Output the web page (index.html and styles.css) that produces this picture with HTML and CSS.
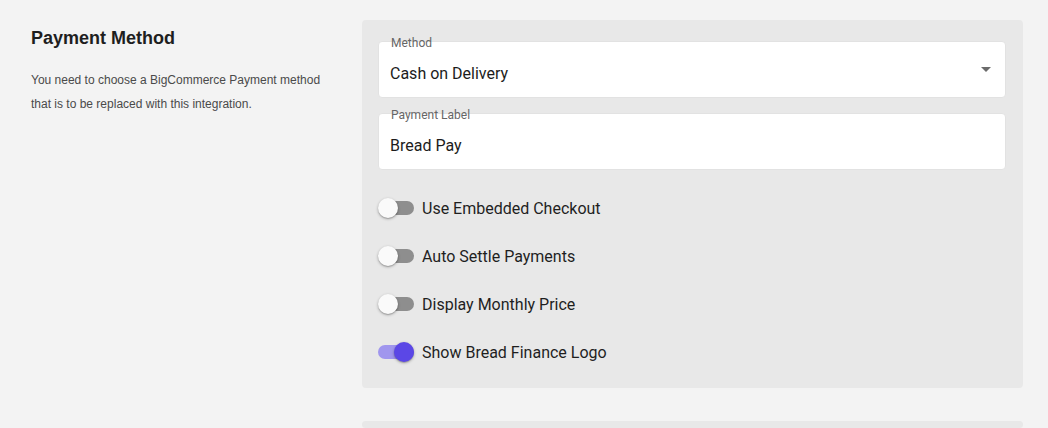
FILE: index.html
```html
<!DOCTYPE html>
<html>
<head>
<meta charset="utf-8">
<link rel="stylesheet" href="styles.css">
</head>
<body>
<div class="page">
  <section class="section">
    <div class="intro">
      <h2 class="title">Payment Method</h2>
      <p class="desc">You need to choose a BigCommerce Payment method that is to be replaced with this integration.</p>
    </div>
    <div class="panel">
      <div class="field">
        <span class="field-label">Method</span>
        <span class="field-value">Cash on Delivery</span>
        <span class="caret"></span>
      </div>
      <div class="field">
        <span class="field-label">Payment Label</span>
        <span class="field-value">Bread Pay</span>
      </div>
      <div class="toggles">
        <label class="toggle-row"><span class="switch"><span class="track"></span><span class="thumb"></span></span><span class="toggle-text">Use Embedded Checkout</span></label>
        <label class="toggle-row"><span class="switch"><span class="track"></span><span class="thumb"></span></span><span class="toggle-text">Auto Settle Payments</span></label>
        <label class="toggle-row"><span class="switch"><span class="track"></span><span class="thumb"></span></span><span class="toggle-text">Display Monthly Price</span></label>
        <label class="toggle-row"><span class="switch on"><span class="track"></span><span class="thumb"></span></span><span class="toggle-text">Show Bread Finance Logo</span></label>
      </div>
    </div>
  </section>
  <section class="section">
    <div class="intro"></div>
    <div class="panel next"></div>
  </section>
</div>
</body>
</html>
```

FILE: styles.css
```css
html, body {
  margin: 0;
  padding: 0;
  background: #f3f3f3;
}
body {
  font-family: Roboto, "Liberation Sans", sans-serif;
  color: #212121;
  overflow: hidden;
  height: 428px;
}
.page {
  padding: 20px 25px 0 31px;
  display: flex;
  flex-direction: column;
  gap: 33px;
}
.section {
  display: flex;
}
.intro {
  width: 331px;
  flex: none;
}
.title {
  margin: 7px 0 0 0;
  font-family: "Liberation Sans", Arial, sans-serif;
  font-weight: bold;
  font-size: 18px;
  line-height: 22px;
  color: #1e1e1e;
}
.desc {
  margin: 19px 0 0 0;
  font-family: "Liberation Sans", Arial, sans-serif;
  font-size: 12px;
  line-height: 24px;
  color: #4a4a4a;
  width: 300px;
}
.panel {
  flex: 1;
  background: #e8e8e8;
  border-radius: 4px;
  padding: 21px 17px 12px 16px;
  display: flex;
  flex-direction: column;
  gap: 15px;
}
.panel.next {
  height: 7px;
  padding: 0;
}
.field {
  position: relative;
  height: 57px;
  box-sizing: border-box;
  background: #fff;
  border: 1px solid #e2e2e2;
  border-radius: 4px;
  padding: 22px 11px 0;
}
.field-label {
  position: absolute;
  left: 11px;
  top: -6px;
  font-size: 12px;
  line-height: 14px;
  color: #666;
  padding: 0 1px;
}
.field-value {
  font-size: 16px;
  line-height: 19px;
  color: #1c1c1c;
}
.caret {
  position: absolute;
  right: 14px;
  top: 25px;
  width: 0;
  height: 0;
  border-left: 5px solid transparent;
  border-right: 5px solid transparent;
  border-top: 5px solid #6b6b6b;
}
.toggles {
  display: flex;
  flex-direction: column;
  margin-top: -1px;
}
.toggle-row {
  height: 48px;
  display: flex;
  align-items: center;
  gap: 8px;
}
.switch {
  position: relative;
  width: 36px;
  height: 20px;
  flex: none;
}
.track {
  position: absolute;
  left: 2px;
  right: 0;
  top: 3px;
  height: 14px;
  border-radius: 7px;
  background: #8e8e8e;
}
.thumb {
  position: absolute;
  left: 0;
  top: 0;
  width: 20px;
  height: 20px;
  border-radius: 50%;
  background: #fafafa;
  box-shadow: 0 1px 3px rgba(0,0,0,0.3), 0 1px 1px rgba(0,0,0,0.14);
}
.switch.on .track {
  left: 0;
  background: #a096ee;
}
.switch.on .thumb {
  left: 16px;
  background: #5b47e6;
}
.toggle-text {
  font-size: 16px;
  line-height: 19px;
  color: #1f1f1f;
}
```
